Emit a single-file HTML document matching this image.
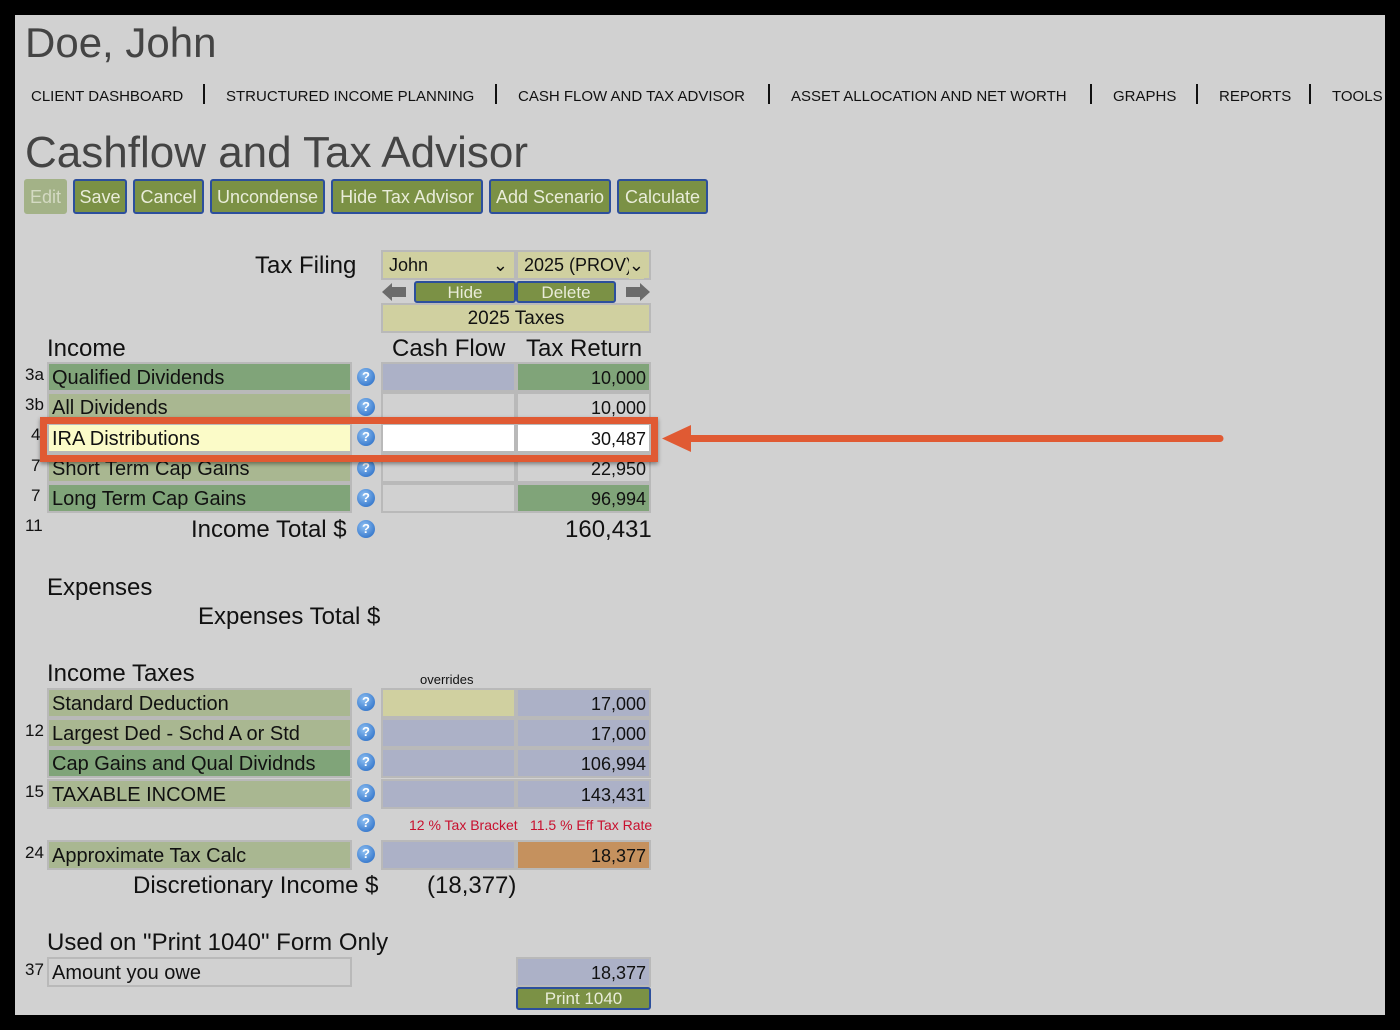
<!DOCTYPE html>
<html><head><meta charset="utf-8"><style>
*{margin:0;padding:0;box-sizing:border-box}
body{width:1400px;height:1030px;background:#000;position:relative;overflow:hidden;font-family:"Liberation Sans",Arial,sans-serif;color:#111}
#pg{position:absolute;left:15px;top:15px;width:1370px;height:1000px;background:#d1d1d1}
.a{position:absolute;white-space:nowrap}
.nav{top:88px;font-size:15px;color:#111}
.sep{position:absolute;top:84px;width:2px;height:20px;background:#111}
.btn{position:absolute;top:179px;height:35px;background:#7b9145;border:2px solid #2c4f9c;border-radius:3px;color:#e9ecd9;font-size:18px;line-height:32px;text-align:center}
.c{position:absolute;border:2px solid #b9b9b9;height:30px}
.lbl{font-size:20px;line-height:28px;padding-left:3px}
.num{font-size:18px;line-height:29px;text-align:right;padding-right:3px}
.dg{background:#80a479}.lg{background:#a9b791}.bl{background:#acb1c7}.gy{background:#d1d1d1}.yl{background:#d0d0a0}.wh{background:#fff}.ly{background:#fbfbc8}.or{background:#c5915e}
.ln{font-size:17px}
.q{position:absolute;width:18px;height:18px;border-radius:50%;background:radial-gradient(circle at 40% 35%,#8fc0f2,#3f7fd0 70%,#2e68b8);color:#fff;font-size:13px;font-weight:bold;line-height:18px;text-align:center}
.h{font-size:24px}
</style></head><body><div id="pg"></div>
<div class="a" style="left:25px;top:19px;font-size:42px;color:#444">Doe, John</div>
<div class="a nav" style="left:31px">CLIENT DASHBOARD</div><div class="sep" style="left:203px"></div>
<div class="a nav" style="left:226px">STRUCTURED INCOME PLANNING</div><div class="sep" style="left:495px"></div>
<div class="a nav" style="left:518px">CASH FLOW AND TAX ADVISOR</div><div class="sep" style="left:768px"></div>
<div class="a nav" style="left:791px">ASSET ALLOCATION AND NET WORTH</div><div class="sep" style="left:1090px"></div>
<div class="a nav" style="left:1113px">GRAPHS</div><div class="sep" style="left:1196px"></div>
<div class="a nav" style="left:1219px">REPORTS</div><div class="sep" style="left:1309px"></div>
<div class="a nav" style="left:1332px">TOOLS</div>
<div class="a" style="left:25px;top:128px;font-size:44px;color:#444">Cashflow and Tax Advisor</div>
<div class="btn" style="left:24px;width:43px;background:#a3b287;border-color:#a3b287;color:#d4dac3">Edit</div>
<div class="btn" style="left:73px;width:54px">Save</div>
<div class="btn" style="left:133px;width:71px">Cancel</div>
<div class="btn" style="left:210px;width:115px">Uncondense</div>
<div class="btn" style="left:331px;width:152px">Hide Tax Advisor</div>
<div class="btn" style="left:489px;width:122px">Add Scenario</div>
<div class="btn" style="left:617px;width:91px">Calculate</div>

<div class="a h" style="left:255px;top:252px">Tax Filing</div>
<div class="c yl" style="left:381px;top:250px;width:135px;height:30px;font-size:18px;line-height:27px;padding-left:6px">John<span style="position:absolute;right:6px;top:0">&#8964;</span></div>
<div class="c yl" style="left:516px;top:250px;width:135px;height:30px;font-size:18px;line-height:27px;padding-left:6px">2025 (PROV)<span style="position:absolute;right:5px;top:0;background:#d0d0a0">&#8964;</span></div>
<svg class="a" style="left:380px;top:281px" width="28" height="22"><path d="M2 11 L12 2 L12 6 L26 6 L26 16 L12 16 L12 20 Z" fill="#6b6b6b"/></svg>
<svg class="a" style="left:624px;top:281px" width="28" height="22"><path d="M26 11 L16 2 L16 6 L2 6 L2 16 L16 16 L16 20 Z" fill="#6b6b6b"/></svg>
<div class="btn" style="left:414px;top:281px;width:102px;height:22px;line-height:19px;font-size:17px">Hide</div>
<div class="btn" style="left:516px;top:281px;width:100px;height:22px;line-height:19px;font-size:17px">Delete</div>
<div class="c yl" style="left:381px;top:303px;width:270px;height:30px;font-size:19px;line-height:28px;text-align:center">2025 Taxes</div>
<div class="a h" style="left:47px;top:335px">Income</div>
<div class="a h" style="left:392px;top:335px">Cash Flow</div>
<div class="a h" style="left:526px;top:335px">Tax Return</div>

<div class="a ln" style="left:25px;top:365px">3a</div>
<div class="c dg lbl" style="left:47px;top:362px;width:305px">Qualified Dividends</div>
<div class="q" style="left:357px;top:368px">?</div>
<div class="c bl" style="left:381px;top:362px;width:135px"></div>
<div class="c dg num" style="left:516px;top:362px;width:135px">10,000</div>

<div class="a ln" style="left:25px;top:395px">3b</div>
<div class="c lg lbl" style="left:47px;top:392px;width:305px">All Dividends</div>
<div class="q" style="left:357px;top:398px">?</div>
<div class="c gy" style="left:381px;top:392px;width:135px"></div>
<div class="c gy num" style="left:516px;top:392px;width:135px">10,000</div>

<div class="a ln" style="left:31px;top:425px">4</div>
<div class="c ly lbl" style="left:47px;top:423px;width:305px">IRA Distributions</div>
<div class="q" style="left:357px;top:428px">?</div>
<div class="c wh" style="left:381px;top:423px;width:135px"></div>
<div class="c wh num" style="left:516px;top:423px;width:135px">30,487</div>

<div class="a ln" style="left:31px;top:456px">7</div>
<div class="c lg lbl" style="left:47px;top:453px;width:305px">Short Term Cap Gains</div>
<div class="q" style="left:357px;top:459px">?</div>
<div class="c gy" style="left:381px;top:453px;width:135px"></div>
<div class="c gy num" style="left:516px;top:453px;width:135px">22,950</div>

<div class="a ln" style="left:31px;top:486px">7</div>
<div class="c dg lbl" style="left:47px;top:483px;width:305px">Long Term Cap Gains</div>
<div class="q" style="left:357px;top:489px">?</div>
<div class="c gy" style="left:381px;top:483px;width:135px"></div>
<div class="c dg num" style="left:516px;top:483px;width:135px">96,994</div>

<div class="a ln" style="left:25px;top:516px">11</div>
<div class="a h" style="left:191px;top:516px">Income Total $</div>
<div class="q" style="left:357px;top:520px">?</div>
<div class="a h" style="left:565px;top:516px">160,431</div>

<div class="a h" style="left:47px;top:574px">Expenses</div>
<div class="a h" style="left:198px;top:603px">Expenses Total $</div>

<div class="a h" style="left:47px;top:660px">Income Taxes</div>
<div class="a" style="left:420px;top:672px;font-size:13px">overrides</div>

<div class="c lg lbl" style="left:47px;top:688px;width:305px">Standard Deduction</div>
<div class="q" style="left:357px;top:693px">?</div>
<div class="c yl" style="left:381px;top:688px;width:135px"></div>
<div class="c bl num" style="left:516px;top:688px;width:135px">17,000</div>

<div class="a ln" style="left:25px;top:721px">12</div>
<div class="c lg lbl" style="left:47px;top:718px;width:305px">Largest Ded - Schd A or Std</div>
<div class="q" style="left:357px;top:723px">?</div>
<div class="c bl" style="left:381px;top:718px;width:135px"></div>
<div class="c bl num" style="left:516px;top:718px;width:135px">17,000</div>

<div class="c dg lbl" style="left:47px;top:748px;width:305px">Cap Gains and Qual Dividnds</div>
<div class="q" style="left:357px;top:753px">?</div>
<div class="c bl" style="left:381px;top:748px;width:135px"></div>
<div class="c bl num" style="left:516px;top:748px;width:135px">106,994</div>

<div class="a ln" style="left:25px;top:782px">15</div>
<div class="c lg lbl" style="left:47px;top:779px;width:305px">TAXABLE INCOME</div>
<div class="q" style="left:357px;top:784px">?</div>
<div class="c bl" style="left:381px;top:779px;width:135px"></div>
<div class="c bl num" style="left:516px;top:779px;width:135px">143,431</div>

<div class="q" style="left:357px;top:814px">?</div>
<div class="a" style="left:409px;top:817px;font-size:14px;color:#c8102e">12 % Tax Bracket</div>
<div class="a" style="left:530px;top:817px;font-size:14px;color:#c8102e">11.5 % Eff Tax Rate</div>

<div class="a ln" style="left:25px;top:843px">24</div>
<div class="c lg lbl" style="left:47px;top:840px;width:305px">Approximate Tax Calc</div>
<div class="q" style="left:357px;top:845px">?</div>
<div class="c bl" style="left:381px;top:840px;width:135px"></div>
<div class="c or num" style="left:516px;top:840px;width:135px">18,377</div>

<div class="a h" style="left:133px;top:872px">Discretionary Income $</div>
<div class="a h" style="left:427px;top:872px">(18,377)</div>

<div class="a h" style="left:47px;top:929px">Used on "Print 1040" Form Only</div>
<div class="a ln" style="left:25px;top:960px">37</div>
<div class="c gy lbl" style="left:47px;top:957px;width:305px">Amount you owe</div>
<div class="c bl num" style="left:516px;top:957px;width:135px">18,377</div>
<div class="btn" style="left:516px;top:987px;width:135px;height:23px;line-height:20px;font-size:17px">Print 1040</div>

<div class="a" style="left:40px;top:417px;width:618px;height:45px;border:7px solid #e05a33;box-shadow:0 2px 4px rgba(0,0,0,.4)"></div>
<svg class="a" style="left:655px;top:420px" width="575" height="40"><path d="M30 18.5 L565 18.5" stroke="#e05a33" stroke-width="7" stroke-linecap="round"/><path d="M7 18.5 L36 5 L36 32 Z" fill="#e05a33"/></svg>
</body></html>
